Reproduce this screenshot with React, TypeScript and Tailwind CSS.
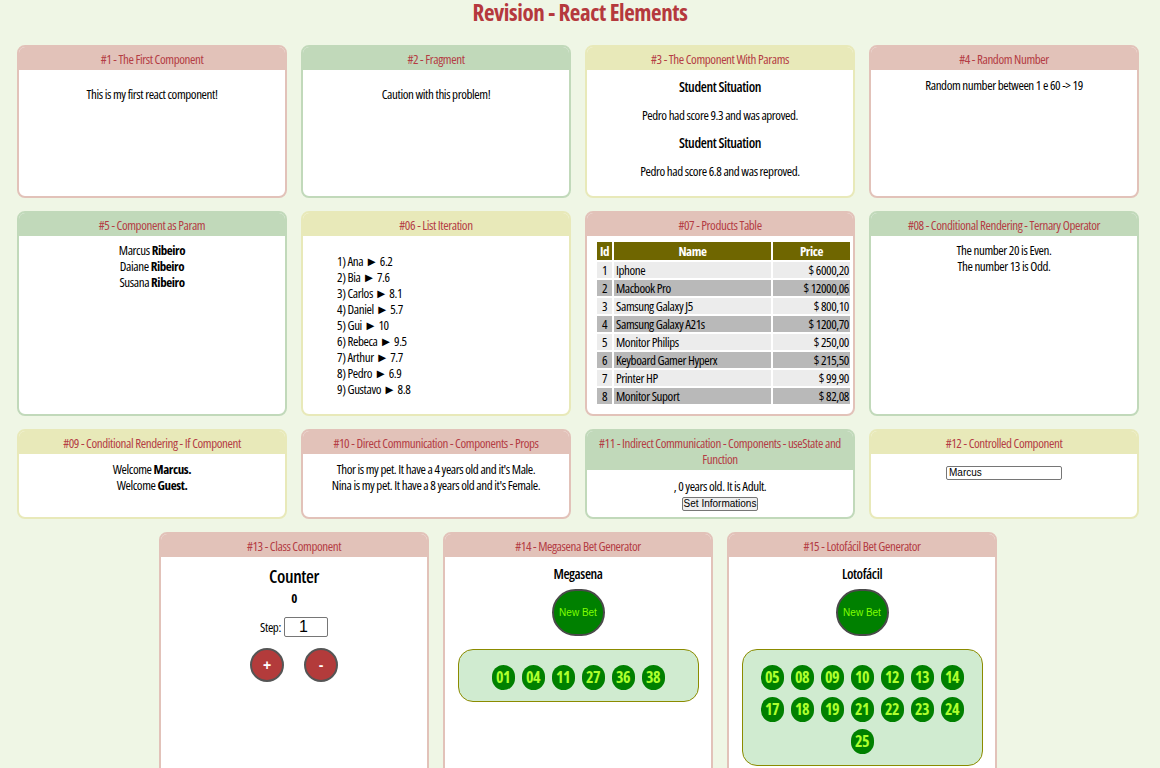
import { ReactNode } from "react"

const arial = "font-['Liberation_Sans',Arial,sans-serif] font-stretch-normal tracking-normal"

type Tone = "pink" | "green" | "yellow"
const tones: Record<Tone, string> = {
  pink: "border-[#e2c2b9]",
  green: "border-[#c1d9ba]",
  yellow: "border-[#e8e9b9]",
}
const heads: Record<Tone, string> = {
  pink: "bg-[#e2c2b9]",
  green: "bg-[#c1d9ba]",
  yellow: "bg-[#e8e9b9]",
}

const Card = ({ title, tone, body = "pt-[7px] pb-[8px]", children }: { title: ReactNode; tone: Tone; body?: string; children: ReactNode }) => {
  return (
    <div className={`w-[270px] flex flex-col overflow-hidden rounded-[8px] border-2 bg-white ${tones[tone]}`}>
      <div className={`${heads[tone]} px-[4px] pt-[4px] pb-[3px] text-center text-[13px] leading-[16px] tracking-[-0.4px] text-[#b43c44]`}>{title}</div>
      <div className={`flex-1 px-2 text-center text-[13px] leading-[16px] tracking-[-0.4px] font-medium text-black ${body}`}>{children}</div>
    </div>
  )
}

const students = [
  ["Ana", "6.2"], ["Bia", "7.6"], ["Carlos", "8.1"], ["Daniel", "5.7"], ["Gui", "10"],
  ["Rebeca", "9.5"], ["Arthur", "7.7"], ["Pedro", "6.9"], ["Gustavo", "8.8"],
]

const products = [
  ["1", "Iphone", "$ 6000,20"],
  ["2", "Macbook Pro", "$ 12000,06"],
  ["3", "Samsung Galaxy J5", "$ 800,10"],
  ["4", "Samsung Galaxy A21s", "$ 1200,70"],
  ["5", "Monitor Philips", "$ 250,00"],
  ["6", "Keyboard Gamer Hyperx", "$ 215,50"],
  ["7", "Printer HP", "$ 99,90"],
  ["8", "Monitor Suport", "$ 82,08"],
]

const Bet = ({ name, numbers }: { name: string; numbers: string[] }) => {
  return (
    <div className="flex flex-col items-center">
      <h4 className="text-[14px] leading-[18px] font-semibold">{name}</h4>
      <button className={`${arial} mt-[6px] w-[53px] h-[47px] rounded-full border-2 border-[#4a4a4a] bg-[#008000] text-[10px] text-[#7fff00]`}>New Bet</button>
      <div className="mt-[13px] w-[241px] rounded-[15px] border border-[#8b8b00] bg-[#d0ebd0] px-[17px] pt-[15px] pb-[11px] flex flex-wrap justify-center gap-[7px]">
        {numbers.map((n) => (
          <span key={n} className="w-[23px] h-[25px] rounded-full bg-[#008000] text-[16px] leading-[25px] font-bold tracking-[-0.6px] text-[#adff2f]">{n}</span>
        ))}
      </div>
    </div>
  )
}

const App = () => {
  return (
    <div className="font-['Open_Sans','Noto_Sans',sans-serif] font-stretch-[75%] min-h-screen bg-[#eff6e5] pt-[1px]">
      <h1 className="text-center text-[23px] leading-[22px] tracking-[-0.4px] font-bold text-[#b5393d]">Revision - React Elements</h1>
      <div className="mt-[22px] w-[1156px] flex flex-wrap justify-center gap-x-[14px] gap-y-[13px] pb-10">
        <Card title="#1 - The First Component" tone="pink">
          <p className="mt-[9px]">This is my first react component!</p>
        </Card>
        <Card title="#2 - Fragment" tone="green">
          <p className="mt-[9px]">Caution with this problem!</p>
        </Card>
        <Card title="#3 - The Component With Params" tone="yellow" body="pt-[8px] pb-[17px]">
          <div className="flex flex-col gap-[11px]">
            <h4 className="text-[14px] leading-[18px] font-semibold">Student Situation</h4>
            <p>Pedro had score 9.3 and was aproved.</p>
            <h4 className="text-[14px] leading-[18px] font-semibold">Student Situation</h4>
            <p>Pedro had score 6.8 and was reproved.</p>
          </div>
        </Card>
        <Card title="#4 - Random Number" tone="pink">
          <p>Random number between 1 e 60 -&gt; 19</p>
        </Card>

        <Card title="#5 - Component as Param" tone="green" body="pt-[6px] pb-[8px]">
          <p>Marcus <b>Ribeiro</b></p>
          <p>Daiane <b>Ribeiro</b></p>
          <p>Susana <b>Ribeiro</b></p>
        </Card>
        <Card title="#06 - List Iteration" tone="yellow">
          <ul className="mt-[10px] mb-[9px] pl-[26px] text-left">
            {students.map(([n, s], i) => (
              <li key={n}>{i + 1}) {n} ► {s}</li>
            ))}
          </ul>
        </Card>
        <Card title="#07 - Products Table" tone="pink" body="pt-[4px] pb-[4px]">
          <table className="mx-auto w-[257px] border-separate border-spacing-[2px]">
            <thead>
              <tr className="bg-[#6f6600] text-white">
                <th className="w-[15px] h-[18px] p-0 leading-[16px] font-bold">Id</th>
                <th className="p-0 leading-[16px] font-bold">Name</th>
                <th className="w-[77px] p-0 leading-[16px] font-bold">Price</th>
              </tr>
            </thead>
            <tbody>
              {products.map(([id, name, price], i) => (
                <tr key={id} className={i % 2 === 0 ? "bg-[#ececec]" : "bg-[#b9b9b9]"}>
                  <td className="h-[16px] p-0 text-center">{id}</td>
                  <td className="px-[2px] py-0 text-left">{name}</td>
                  <td className="px-[1px] py-0 text-right">{price}</td>
                </tr>
              ))}
            </tbody>
          </table>
        </Card>
        <Card title="#08 - Conditional Rendering - Ternary Operator" tone="green" body="pt-[6px] pb-[8px]">
          <p>The number 20 is Even.</p>
          <p>The number 13 is Odd.</p>
        </Card>

        <Card title="#09 - Conditional Rendering - If Component" tone="yellow">
          <p>Welcome <b>Marcus.</b></p>
          <p>Welcome <b>Guest.</b></p>
        </Card>
        <Card title="#10 - Direct Communication - Components - Props" tone="pink">
          <p>Thor is my pet. It have a 4 years old and it's Male.</p>
          <p>Nina is my pet. It have a 8 years old and it's Female.</p>
        </Card>
        <Card
          title={<><span className="whitespace-nowrap">#11 - Indirect Communication - Components - useState and</span><br />Function</>}
          tone="green"
          body="pt-[8px] pb-[6px]"
        >
          <p>, 0 years old. It is Adult.</p>
          <button className={`${arial} mt-[2px] h-[14px] rounded-[2px] border border-[#767676] bg-[#efefef] px-[1px] text-[10px] leading-[12px]`}>Set Informations</button>
        </Card>
        <Card title="#12 - Controlled Component" tone="yellow" body="pt-[9px] pb-[8px]">
          <input
            readOnly
            value="Marcus"
            className={`${arial} w-[116px] h-[14px] rounded-[2px] border border-[#767676] px-[2px] text-[10px] leading-[12px] outline-none`}
          />
        </Card>

        <Card title="#13 - Class Component" tone="pink" body="pt-[9px] pb-[90px]">
          <div className="flex flex-col items-center">
            <h2 className="text-[18px] leading-[20px] font-semibold">Counter</h2>
            <p className="mt-[4px] font-bold">0</p>
            <div className="mt-[11px] flex items-center gap-[3px]">
              <span>Step:</span>
              <input readOnly value="1" className={`${arial} w-[44px] h-[20px] rounded-[2px] border border-[#767676] pl-[14px] text-[16px] outline-none`} />
            </div>
            <div className="mt-[11px] flex gap-[20px]">
              <button className={`${arial} w-[34px] h-[34px] rounded-full border-2 border-[#555] bg-[#b33b3b] text-[14px] font-bold text-white`}>+</button>
              <button className={`${arial} w-[34px] h-[34px] rounded-full border-2 border-[#555] bg-[#b33b3b] text-[14px] font-bold text-white`}>-</button>
            </div>
          </div>
        </Card>
        <Card title="#14 - Megasena Bet Generator" tone="pink" body="pt-[8px] pb-[20px]">
          <Bet name="Megasena" numbers={["01", "04", "11", "27", "36", "38"]} />
        </Card>
        <Card title="#15 - Lotofácil Bet Generator" tone="pink" body="pt-[8px] pb-[20px]">
          <Bet
            name="Lotofácil"
            numbers={["05", "08", "09", "10", "12", "13", "14", "17", "18", "19", "21", "22", "23", "24", "25"]}
          />
        </Card>
      </div>
    </div>
  )
}

export default App
